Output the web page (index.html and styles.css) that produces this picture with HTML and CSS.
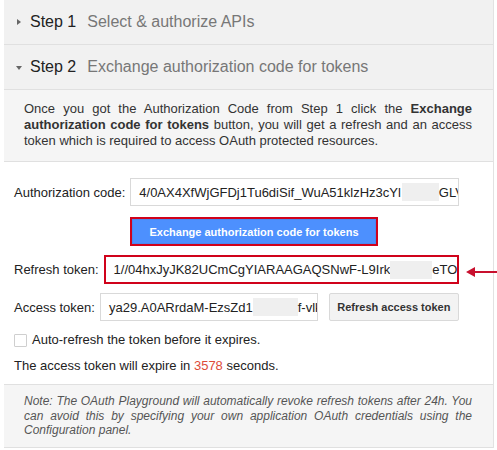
FILE: index.html
```html
<!DOCTYPE html>
<html>
<head>
<meta charset="utf-8">
<link rel="stylesheet" href="styles.css">
</head>
<body>
<div class="panel">
  <div class="step-header">
    <span class="tri tri-right"></span>
    <span class="step-num">Step 1</span>
    <span class="step-title">Select &amp; authorize APIs</span>
  </div>
  <div class="step-header">
    <span class="tri tri-down"></span>
    <span class="step-num">Step 2</span>
    <span class="step-title">Exchange authorization code for tokens</span>
  </div>
  <div class="desc">
    Once you got the Authorization Code from Step 1 click the <b>Exchange authorization code for tokens</b> button, you will get a refresh and an access token which is required to access OAuth protected resources.
  </div>
  <div class="body">
    <div class="row">
      <span class="label">Authorization code:</span>
      <div class="field field-auth">4/0AX4XfWjGFDj1Tu6diSif_WuA51klzHz3cYl<span class="redact r1"></span>GLVx</div>
    </div>
    <div class="btn-row">
      <div class="hl-btn"><button class="btn-blue">Exchange authorization code for tokens</button></div>
    </div>
    <div class="row row-gap">
      <span class="label">Refresh token:</span>
      <div class="field field-refresh">1//04hxJyJK82UCmCgYIARAAGAQSNwF-L9Irk<span class="redact r2"></span>eTOoX</div>
      <svg class="arrow" width="36" height="12" viewBox="0 0 36 12"><path d="M0 6 L9 1 L9 5 L36 5 L36 7 L9 7 L9 11 Z" fill="#c8102e"/></svg>
    </div>
    <div class="row row-gap">
      <span class="label">Access token:</span>
      <div class="field field-access">ya29.A0ARrdaM-EzsZd1<span class="redact r3"></span>f-vlk</div>
      <button class="btn-grey">Refresh access token</button>
    </div>
    <div class="check-row">
      <span class="checkbox"></span>
      <span>Auto-refresh the token before it expires.</span>
    </div>
    <div class="expire">The access token will expire in <span class="secs">3578</span> seconds.</div>
  </div>
  <div class="note">Note: The OAuth Playground will automatically revoke refresh tokens after 24h. You can avoid this by specifying your own application OAuth credentials using the Configuration panel.</div>
</div>
</body>
</html>
```
FILE: styles.css
```css
html, body {
  margin: 0;
  padding: 0;
  background: #ffffff;
}
body {
  font-family: "Liberation Sans", Arial, sans-serif;
  color: #222;
}
.panel {
  margin-left: 4px;
  width: 489px;
  border-right: 1px solid #e2e2e2;
  background: #fff;
}
.step-header {
  height: 44px;
  background: #f1f1f1;
  border-bottom: 1px solid #e0e0e0;
  display: flex;
  align-items: center;
  padding-left: 12px;
  font-size: 16px;
}
.tri {
  display: inline-block;
  width: 0;
  height: 0;
}
.tri-right {
  border-top: 3px solid transparent;
  border-bottom: 3px solid transparent;
  border-left: 4px solid #666;
  margin-left: 1px;
  margin-right: 9px;
}
.tri-down {
  border-left: 3px solid transparent;
  border-right: 3px solid transparent;
  border-top: 4px solid #666;
  margin-left: 0;
  margin-right: 8px;
  margin-top: 1px;
}
.step-num {
  color: #222;
}
.step-title {
  color: #777;
  margin-left: 11px;
}
.desc {
  background: #f5f5f5;
  border-bottom: 1px solid #e0e0e0;
  padding: 11px 21px 12px 20px;
  font-size: 13px;
  line-height: 16px;
  color: #333;
  text-align: justify;
}
.desc b {
  color: #333;
}
.body {
  padding: 16px 34px 10px 10px;
  font-size: 13px;
}
.row {
  display: flex;
  align-items: center;
  position: relative;
}
.row-gap {
  margin-top: 9px;
}
.label {
  color: #222;
  margin-right: 5px;
  white-space: nowrap;
}
.field {
  box-sizing: border-box;
  height: 28px;
  border: 1px solid #d9d9d9;
  background: #fff;
  white-space: nowrap;
  overflow: hidden;
  display: flex;
  align-items: center;
  color: #222;
  font-size: 13px;
}
.field-auth {
  width: 331px;
  padding-left: 8px;
}
.field-refresh {
  width: 358px;
  height: 29px;
  border: 2px solid #d0021b;
  padding-left: 8px;
  margin-left: 0;
}
.field-access {
  width: 219px;
  padding-left: 8px;
}
.redact {
  display: inline-block;
  height: 18px;
  background: #efefef;
  flex: none;
}
.r1 { width: 37px; margin-left: 1px; }
.r2 { width: 42px; margin-left: 0; }
.r3 { width: 45px; margin-left: 0; }
.arrow {
  position: absolute;
  left: 452px;
  top: 11px;
}
.btn-row {
  margin-top: 11px;
  padding-left: 116px;
}
.hl-btn {
  display: inline-block;
  border: 2px solid #d0021b;
  width: 244px;
  height: 25px;
  background: #4d8ff6;
}
.btn-blue {
  display: block;
  width: 100%;
  height: 100%;
  border: 1px solid #4a88ee;
  background: #4d90fe;
  color: #fff;
  font-family: "Liberation Sans", Arial, sans-serif;
  font-weight: bold;
  font-size: 11px;
  padding: 0;
}
.btn-grey {
  box-sizing: border-box;
  width: 131px;
  height: 28px;
  margin-left: 11px;
  border: 1px solid #d9d9d9;
  border-radius: 2px;
  background: #f3f3f3;
  color: #333;
  font-family: "Liberation Sans", Arial, sans-serif;
  font-weight: bold;
  font-size: 11px;
  padding: 0;
}
.check-row {
  display: flex;
  align-items: center;
  margin-top: 11px;
  line-height: 16px;
}
.checkbox {
  box-sizing: border-box;
  width: 13px;
  height: 13px;
  border: 1px solid #cfcfcf;
  border-radius: 1px;
  background: #fff;
  margin-left: 0;
  margin-right: 5px;
}
.expire {
  margin-top: 10px;
  line-height: 16px;
  color: #222;
}
.secs {
  color: #dd4b39;
}
.note {
  background: #f5f5f5;
  border-top: 1px solid #e0e0e0;
  border-bottom: 1px solid #e0e0e0;
  padding: 9px 21px 9px 20px;
  font-size: 12px;
  line-height: 14.5px;
  font-style: italic;
  color: #555;
  text-align: justify;
}
```
